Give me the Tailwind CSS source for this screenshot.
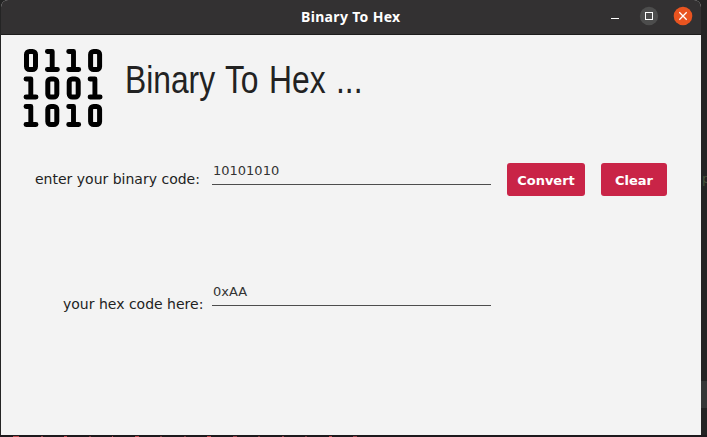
<!DOCTYPE html>
<html lang="en">
<head>
<meta charset="utf-8">
<title>Binary To Hex</title>
<script src="https://cdn.jsdelivr.net/npm/@tailwindcss/browser@4"></script>
</head>
<body class="relative h-[437px] w-[707px] overflow-hidden bg-[#242424] font-['DejaVu_Sans',sans-serif] text-[#222]">
<div class="absolute right-0 top-[381px] h-[27px] w-[8px] bg-[#353737]"></div>
<div class="absolute left-[702px] top-[171px] text-[13px] leading-4 text-[#46523b]">p</div>
<div class="absolute left-0 top-[435px] h-[2px] w-[707px] bg-[#1d191c]"></div>
<div class="absolute left-[13px] top-[436px] flex h-px w-[344px] justify-between">
<i class="w-[6px] bg-[#b84a4f]"></i><i class="w-[2px] bg-[#93434a]"></i><i class="w-[3px] bg-[#b84a4f]"></i><i class="w-[2px] bg-[#72383d]"></i><i class="w-[1px] bg-[#b84a4f]"></i><i class="w-[4px] bg-[#b84a4f]"></i><i class="w-[2px] bg-[#72383d]"></i><i class="w-[2px] bg-[#72383d]"></i><i class="w-[4px] bg-[#b84a4f]"></i><i class="w-[4px] bg-[#93434a]"></i><i class="w-[2px] bg-[#72383d]"></i><i class="w-[2px] bg-[#93434a]"></i><i class="w-[2px] bg-[#72383d]"></i><i class="w-[3px] bg-[#b84a4f]"></i><i class="w-[4px] bg-[#93434a]"></i>
</div>
<main class="relative ml-px flex h-[435px] w-[700px] flex-col overflow-hidden rounded-t-[7px] bg-[#f3f3f3]">
<header class="flex h-[35px] shrink-0 items-start border-b border-[#1d1c1c] bg-[#333132] text-white">
<div class="w-[300px]"></div>
<div class="w-[300px] whitespace-nowrap pt-[7px] font-['Noto_Sans',sans-serif] text-[14px] font-bold leading-5 tracking-[.33px]">Binary To Hex</div>
<svg class="h-[34px] w-[100px]" viewBox="601 0 100 34" fill="none" stroke="white">
<path d="M611 18.5h8"/>
<circle cx="649" cy="16" r="9.2" fill="#4d4d4d" stroke="none"/>
<rect x="645.5" y="12.5" width="7" height="7"/>
<circle cx="683" cy="16" r="9.3" fill="#e95420" stroke="none"/>
<path d="M679.3 12.3l7.4 7.4m0-7.4l-7.4 7.4" stroke-width="1.3"/>
</svg>
</header>
<section class="flex h-[100px] shrink-0 pl-[22px] pt-[13px]">
<svg class="h-[82px] w-[82px] shrink-0" viewBox="23 48 82 82" fill="none" stroke="black" stroke-width="5">
<defs>
<rect id="ring" x="2.7" y="2.5" width="9" height="18" rx="3"/>
<path id="bar" d="M2.2 2.5H7V20.5M2.2 20.5H12.2" stroke-linecap="round" stroke-linejoin="round" stroke-width="4.9"/>
</defs>
<use href="#ring" x="23.8" y="49"/><use href="#bar" x="45.2" y="49"/><use href="#bar" x="66.5" y="49"/><use href="#ring" x="87.9" y="49"/>
<use href="#bar" x="23.8" y="76.5"/><use href="#ring" x="45.1" y="76.5"/><use href="#ring" x="66.5" y="76.5"/><use href="#bar" x="87.9" y="76.5"/>
<use href="#bar" x="23.8" y="104"/><use href="#ring" x="45.1" y="104"/><use href="#bar" x="66.5" y="104"/><use href="#ring" x="87.9" y="104"/>
</svg>
<h1 class="ml-[20px] mt-[9px] h-[46px] whitespace-nowrap font-['Liberation_Sans_Narrow','Liberation_Sans',sans-serif] text-[39px] leading-[46px]"><span class="inline-block origin-left scale-x-[.815] [word-spacing:2px]">Binary To Hex ...</span></h1>
</section>
<section class="flex h-[121px] shrink-0 items-start pt-[25px]">
<label class="w-[211px] whitespace-nowrap pl-[34px] pt-[11px] text-[14px] leading-4">enter your binary code:</label>
<div class="h-[25px] w-[279px] border-b border-[#4d4d4d] pl-px pt-[3px] text-[13px] leading-4 text-[#333]">10101010</div>
<button class="ml-[16px] mt-[3px] h-[33px] w-[78px] rounded-[3px] bg-[#c92447] pt-[3px] text-[13px] font-bold text-white">Convert</button>
<button class="ml-[16px] mt-[3px] h-[33px] w-[66px] rounded-[3px] bg-[#c92447] pt-[3px] text-[13px] font-bold text-white">Clear</button>
</section>
<section class="flex items-start pt-[25px]">
<label class="w-[211px] whitespace-nowrap pl-[62px] pt-[15px] text-[14px] leading-4">your hex code here:</label>
<div class="h-[25px] w-[279px] border-b border-[#4d4d4d] pl-px pt-[3px] text-[13px] leading-4 text-[#333]">0xAA</div>
</section>
</main>
</body>
</html>
